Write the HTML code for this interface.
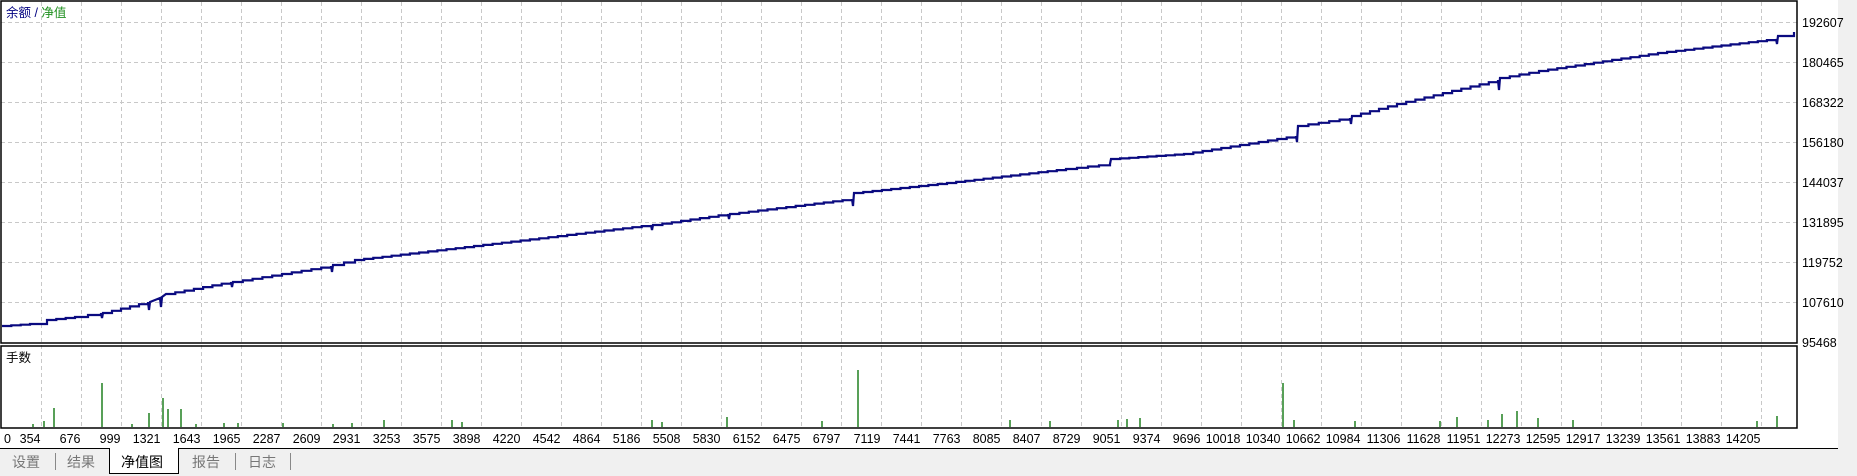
<!DOCTYPE html>
<html><head><meta charset="utf-8"><style>
html,body{margin:0;padding:0;background:#fff;width:1857px;height:476px;overflow:hidden;font-family:"Liberation Sans","Noto Sans CJK SC",sans-serif}
</style></head><body>
<svg width="1857" height="476" xmlns="http://www.w3.org/2000/svg" style="position:absolute;left:0;top:0;font-family:'Liberation Sans','Noto Sans CJK SC',sans-serif">
<rect x="0" y="0" width="1857" height="476" fill="#fff"/>
<rect x="1838" y="0" width="19" height="448" fill="#f0f0f0"/>
<g stroke="#c8c8c8" stroke-dasharray="4,3" stroke-width="1">
<line x1="1" y1="22.5" x2="1797" y2="22.5"/><line x1="1" y1="62.5" x2="1797" y2="62.5"/><line x1="1" y1="102.5" x2="1797" y2="102.5"/><line x1="1" y1="142.5" x2="1797" y2="142.5"/><line x1="1" y1="182.5" x2="1797" y2="182.5"/><line x1="1" y1="222.5" x2="1797" y2="222.5"/><line x1="1" y1="262.5" x2="1797" y2="262.5"/><line x1="1" y1="302.5" x2="1797" y2="302.5"/>
</g>
<g id="vg" stroke="#c8c8c8" stroke-dasharray="4,3" stroke-width="1"></g>
<g stroke="#000" stroke-width="1.5" fill="none">
<rect x="1" y="1" width="1796" height="342"/>
<rect x="1" y="346" width="1796" height="82"/>
</g>
<g stroke="#208020" stroke-width="1.5">
<line x1="33" y1="427" x2="33" y2="424"/><line x1="44" y1="427" x2="44" y2="421"/><line x1="54" y1="427" x2="54" y2="408"/><line x1="102" y1="427" x2="102" y2="383"/><line x1="132" y1="427" x2="132" y2="424"/><line x1="149" y1="427" x2="149" y2="413"/><line x1="163" y1="427" x2="163" y2="398"/><line x1="168" y1="427" x2="168" y2="409"/><line x1="181" y1="427" x2="181" y2="409"/><line x1="196" y1="427" x2="196" y2="424"/><line x1="224" y1="427" x2="224" y2="423"/><line x1="238" y1="427" x2="238" y2="423"/><line x1="283" y1="427" x2="283" y2="423"/><line x1="333" y1="427" x2="333" y2="424"/><line x1="352" y1="427" x2="352" y2="423"/><line x1="384" y1="427" x2="384" y2="420"/><line x1="452" y1="427" x2="452" y2="420"/><line x1="462" y1="427" x2="462" y2="422"/><line x1="652" y1="427" x2="652" y2="420"/><line x1="662" y1="427" x2="662" y2="422"/><line x1="727" y1="427" x2="727" y2="417"/><line x1="822" y1="427" x2="822" y2="421"/><line x1="858" y1="427" x2="858" y2="370"/><line x1="1010" y1="427" x2="1010" y2="420"/><line x1="1050" y1="427" x2="1050" y2="421"/><line x1="1118" y1="427" x2="1118" y2="420"/><line x1="1127" y1="427" x2="1127" y2="419"/><line x1="1140" y1="427" x2="1140" y2="418"/><line x1="1283" y1="427" x2="1283" y2="383"/><line x1="1294" y1="427" x2="1294" y2="420"/><line x1="1355" y1="427" x2="1355" y2="421"/><line x1="1440" y1="427" x2="1440" y2="421"/><line x1="1457" y1="427" x2="1457" y2="417"/><line x1="1488" y1="427" x2="1488" y2="420"/><line x1="1502" y1="427" x2="1502" y2="414"/><line x1="1517" y1="427" x2="1517" y2="411"/><line x1="1538" y1="427" x2="1538" y2="418"/><line x1="1573" y1="427" x2="1573" y2="420"/><line x1="1757" y1="427" x2="1757" y2="421"/><line x1="1777" y1="427" x2="1777" y2="416"/>
</g>
<polyline id="eq" fill="none" stroke="#0a0a80" stroke-width="2.2" points="2,326 30,324 47,320 75,317 101,313 102,318 103,313 148,302 149,310 150,302 160,298 161,307 162,297 166,294 231,282 232,287 233,282 331,266 332,272 333,265 355,260 474,246 651,225 652,230 653,225 728,214 729,219 730,214 852,199 853,206 854,193 947,183 1066,169 1110,164 1111,159 1184,154 1296,136 1297,142 1298,126 1350,118 1351,124 1352,116 1397,104 1498,80 1499,90 1500,78 1539,71 1658,53 1776,39 1777,44 1778,36 1794,32"/>
<g font-size="12.5" fill="#000">
<text x="1802" y="27">192607</text><text x="1802" y="67">180465</text><text x="1802" y="107">168322</text><text x="1802" y="147">156180</text><text x="1802" y="187">144037</text><text x="1802" y="227">131895</text><text x="1802" y="267">119752</text><text x="1802" y="307">107610</text><text x="1802" y="347">95468</text>
</g>
<text x="6" y="17" font-size="12.5"><tspan fill="#000080">余额 / </tspan><tspan fill="#209020">净值</tspan></text>
<text x="6" y="362" font-size="12.5" fill="#000">手数</text>
<g id="xl" font-size="12.5" fill="#000" text-anchor="end"></g>
<rect x="0" y="448" width="1857" height="28" fill="#f0f0f0"/>
<line x1="0" y1="448.5" x2="1838" y2="448.5" stroke="#000"/>
<path d="M109.5 448 V473.5 H178.5 V448" fill="#fff" stroke="#000"/>
<rect x="110" y="447" width="68" height="3" fill="#fff"/>
<g font-size="14" fill="#777">
<text x="12" y="467">设置</text><text x="67" y="467">结果</text><text x="192" y="467">报告</text><text x="248" y="467">日志</text>
</g>
<text x="121" y="467" font-size="14" fill="#000">净值图</text>
<g stroke="#888"><line x1="55.5" y1="453" x2="55.5" y2="470"/><line x1="235.5" y1="453" x2="235.5" y2="470"/><line x1="290.5" y1="453" x2="290.5" y2="470"/></g>
</svg>
<script>
var ns="http://www.w3.org/2000/svg",vg=document.getElementById('vg'),xl=document.getElementById('xl');
var L=["354","676","999","1321","1643","1965","2287","2609","2931","3253","3575","3898","4220","4542","4864","5186","5508","5830","6152","6475","6797","7119","7441","7763","8085","8407","8729","9051","9374","9696","10018","10340","10662","10984","11306","11628","11951","12273","12595","12917","13239","13561","13883","14205"];
for(var i=0;i<L.length;i++){var x=41.5+i*40;
var l=document.createElementNS(ns,'line');l.setAttribute('x1',x);l.setAttribute('x2',x);l.setAttribute('y1',2);l.setAttribute('y2',428);vg.appendChild(l);
var t=document.createElementNS(ns,'text');t.setAttribute('x',x-1);t.setAttribute('y',443);t.textContent=L[i];xl.appendChild(t);}
var t0=document.createElementNS(ns,'text');t0.setAttribute('x',11);t0.setAttribute('y',443);t0.textContent="0";xl.appendChild(t0);
// stairstep the equity line
var eq=document.getElementById('eq');var p=eq.getAttribute('points').trim().split(/\s+/).map(function(s){return s.split(',').map(Number);});
var out=[p[0]];
for(var k=1;k<p.length;k++){var a=p[k-1],b=p[k];var dx=b[0]-a[0];
 if(dx>12){var n=Math.floor(dx/9);for(var j=1;j<n;j++){var x=a[0]+dx*j/n;var y=a[1]+(b[1]-a[1])*j/n;out.push([x,out[out.length-1][1]]);out.push([x,y]);}out.push([b[0],out[out.length-1][1]]);}
 out.push(b);}
eq.setAttribute('points',out.map(function(q){return q[0].toFixed(1)+','+q[1].toFixed(1);}).join(' '));
</script>
</body></html>
